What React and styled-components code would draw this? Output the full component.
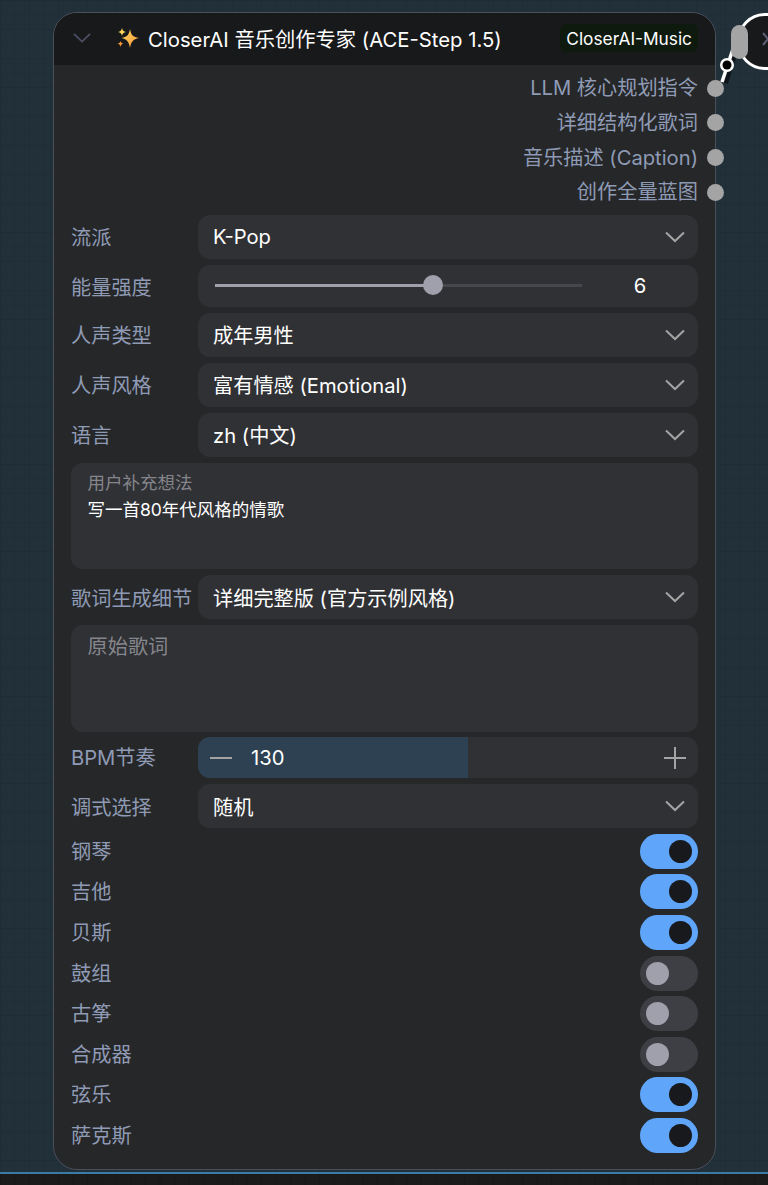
import React from "react";
import styled, { createGlobalStyle } from "styled-components";

const Global = createGlobalStyle`
  html, body { margin: 0; padding: 0; background: #1a1a1a; }
  body { font-family: Inter, "Noto Sans CJK SC", "Noto Sans", sans-serif; }
`;

const Page = styled.div`
  width: 768px;
  height: 1185px;
  overflow: hidden;
  background-color: #1b1b1b;
  background-image: linear-gradient(90deg, #171717 1px, transparent 1px);
  background-size: 14.5px 14.5px;
`;

const Canvas = styled.div`
  position: relative;
  height: 1174px;
  box-sizing: border-box;
  padding: 12px 0 0 53px;
  background-color: #22303a;
  background-image:
    linear-gradient(#202d36 1px, transparent 1px),
    linear-gradient(90deg, #202d36 1px, transparent 1px);
  background-size: 14.5px 14.5px;
  border-bottom: 2px solid #3a7ca5;
  overflow: hidden;
`;

const Node = styled.div`
  position: relative;
  width: 663px;
  height: 1158px;
  box-sizing: border-box;
  border: 1px solid #4a4f5c;
  border-radius: 24px;
  background: #262729;
`;

const Header = styled.div`
  display: flex;
  align-items: center;
  height: 52px;
  box-sizing: border-box;
  padding: 0 17px 2px 19px;
  background: #18191a;
  border-radius: 23px 23px 0 0;
`;

const Title = styled.div`
  flex: 1;
  display: flex;
  align-items: center;
  gap: 9px;
  margin-left: 26px;
  color: #fff;
  font-size: 20.3px;
  white-space: nowrap;
`;

const Badge = styled.div`
  display: flex;
  align-items: center;
  height: 28px;
  padding: 0 6px;
  border-radius: 6px;
  background: #0f1a0f;
  color: #fff;
  font-size: 17.3px;
  white-space: nowrap;
`;

const Outputs = styled.div`
  display: flex;
  flex-direction: column;
  margin-top: 6px;
`;

const Output = styled.div`
  position: relative;
  display: flex;
  align-items: center;
  justify-content: flex-end;
  height: 34.67px;
  padding-right: 17px;
  padding-bottom: 3px;
  box-sizing: border-box;
  color: #8f9bb5;
  font-size: 20.2px;
  white-space: nowrap;
`;

const Slot = styled.span`
  position: absolute;
  right: -9px;
  top: 50%;
  width: 17px;
  height: 17px;
  margin-top: -8.5px;
  border-radius: 50%;
  background: #a4a4a4;
`;

const Widgets = styled.div`
  display: flex;
  flex-direction: column;
  gap: 5.6px;
  padding: 0 17px;
  margin-top: 5px;
`;

const Row = styled.div`
  display: grid;
  grid-template-columns: 127px 1fr;
  align-items: center;
`;

const Label = styled.div`
  box-sizing: border-box;
  padding-top: ${(p) => p.$pt}px;
  color: #8f9bb5;
  font-size: 20.2px;
  line-height: 26px;
  white-space: nowrap;
`;

const Field = styled.div`
  display: flex;
  align-items: center;
  box-sizing: border-box;
  height: ${(p) => p.$h}px;
  padding: 0 12px 0 15px;
  border-radius: 12px;
  background: #303135;
  color: #fff;
  font-size: 20.2px;
  white-space: nowrap;
`;

const Value = styled.span`
  flex: 1;
`;

const SliderTrack = styled.div`
  position: relative;
  width: 367px;
  height: 3px;
  margin-left: 2px;
  background: #46474c;
`;

const SliderFill = styled.div`
  height: 100%;
  background: #a0a0ac;
`;

const SliderThumb = styled.span`
  position: absolute;
  top: -9px;
  width: 20px;
  height: 20px;
  margin-left: -10px;
  border-radius: 50%;
  background: #a0a0ac;
`;

const SliderValue = styled.span`
  flex: 1;
  text-align: center;
  padding-left: 12px;
`;

const Area = styled.div`
  box-sizing: border-box;
  height: 106.8px;
  padding: 8px 16.5px;
  border-radius: 12px;
  background: #303135;
`;

const AreaHint = styled.div`
  color: #85868c;
  font-size: ${(p) => p.$size}px;
  line-height: ${(p) => p.$lh}px;
`;

const AreaText = styled.div`
  color: #fff;
  font-size: 17.5px;
  line-height: 30px;
`;

const Stepper = styled.div`
  position: relative;
  display: flex;
  align-items: center;
  box-sizing: border-box;
  height: 41px;
  padding: 0 11px;
  border-radius: 12px;
  overflow: hidden;
  background: #303135;
  color: #fff;
  font-size: 20.2px;
`;

const StepperFill = styled.div`
  position: absolute;
  left: 0;
  top: 0;
  bottom: 0;
  background: #2d4153;
`;

const StepperNum = styled.span`
  position: relative;
  flex: 1;
  margin-left: 18px;
`;

const StepperIcon = styled.svg`
  position: relative;
  display: block;
  flex: none;
`;

const ToggleRow = styled.div`
  display: flex;
  align-items: center;
  justify-content: space-between;
  height: 35px;
`;

const Toggle = styled.div`
  display: flex;
  align-items: center;
  justify-content: ${(p) => (p.$on ? "flex-end" : "flex-start")};
  box-sizing: border-box;
  width: 58px;
  height: 35px;
  padding: 0 6px;
  border-radius: 18px;
  background: ${(p) => (p.$on ? "#5fa5fa" : "#3e3f44")};
`;

const Knob = styled.span`
  width: 23px;
  height: 23px;
  border-radius: 50%;
  background: ${(p) => (p.$on ? "#18191c" : "#a0a0ac")};
`;

const Other = styled.div`
  position: absolute;
  left: 737px;
  top: 13px;
  width: 80px;
  height: 57px;
  box-sizing: border-box;
  border: 3px solid #fff;
  border-radius: 28px;
  background: #18191a;
`;

const Overlay = styled.svg`
  position: absolute;
  left: 700px;
  top: 0;
`;

const ChevronIcon = styled.svg`
  display: block;
  flex: none;
  margin-right: ${(p) => p.$mr}px;
`;

const Chevron = ({ color = "#a4a4a4", w = 20, sw = 2, mr = 1 }) => (
  <ChevronIcon $mr={mr} width={w} height="12" viewBox="0 0 20 12" fill="none">
    <path d="M1 1.5 L10 10 L19 1.5" stroke={color} strokeWidth={sw} />
  </ChevronIcon>
);

const Sparkle = () => (
  <svg width="22" height="22" viewBox="0 0 22 20" style={{ flex: "none" }}>
    <defs>
      <linearGradient id="sp" x1="0" y1="0" x2="1" y2="1">
        <stop offset="0" stopColor="#ffd65a" />
        <stop offset="1" stopColor="#f7963c" />
      </linearGradient>
    </defs>
    <path d="M13 1 C14 7 16 9 22 10 C16 11 14 14 13 20 C12 14 10 11 4.5 10 C10 9 12 7 13 1Z" fill="url(#sp)" />
    <path d="M5 0 C5.5 2.5 6.5 3.3 9 4 C6.5 4.6 5.5 5.4 5 8 C4.5 5.4 3.5 4.6 1 4 C3.5 3.3 4.5 2.5 5 0Z" fill="#ffd65a" />
    <path d="M3.5 13 C3.9 14.6 4.5 15.2 6.5 15.7 C4.5 16.1 3.9 16.8 3.5 19 C3.1 16.8 2.5 16.1 0.5 15.7 C2.5 15.2 3.1 14.6 3.5 13Z" fill="#f7963c" />
  </svg>
);

const outputs = ["LLM 核心规划指令", "详细结构化歌词", "音乐描述 (Caption)", "创作全量蓝图"];
const toggles = [
  ["钢琴", true],
  ["吉他", true],
  ["贝斯", true],
  ["鼓组", false],
  ["古筝", false],
  ["合成器", false],
  ["弦乐", true],
  ["萨克斯", true],
];

const Select = ({ label, value }) => (
  <Row>
    <Label $pt={3}>{label}</Label>
    <Field $h={44.4}>
      <Value>{value}</Value>
      <Chevron />
    </Field>
  </Row>
);

export default function App() {
  return (
    <Page>
      <Global />
      <Canvas>
        <Other />
        <Node>
          <Header>
            <Chevron color="#4c4f63" w={18} mr={0} />
            <Title>
              <Sparkle />
              <span>CloserAI 音乐创作专家 (ACE-Step 1.5)</span>
            </Title>
            <Badge>CloserAI-Music</Badge>
          </Header>
          <Outputs>
            {outputs.map((o) => (
              <Output key={o}>
                {o}
                <Slot />
              </Output>
            ))}
          </Outputs>
          <Widgets>
            <Select label="流派" value="K-Pop" />
            <Row>
              <Label $pt={5}>能量强度</Label>
              <Field $h={42.4}>
                <SliderTrack>
                  <SliderFill style={{ width: "59.4%" }} />
                  <SliderThumb style={{ left: "59.4%" }} />
                </SliderTrack>
                <SliderValue>6</SliderValue>
              </Field>
            </Row>
            <Select label="人声类型" value="成年男性" />
            <Select label="人声风格" value="富有情感 (Emotional)" />
            <Select label="语言" value="zh (中文)" />
            <Area>
              <AreaHint $size={17.5} $lh={24}>用户补充想法</AreaHint>
              <AreaText>写一首80年代风格的情歌</AreaText>
            </Area>
            <Select label="歌词生成细节" value="详细完整版 (官方示例风格)" />
            <Area>
              <AreaHint $size={20.2} $lh={28}>原始歌词</AreaHint>
            </Area>
            <Row>
              <Label $pt={0}>BPM节奏</Label>
              <Stepper>
                <StepperFill style={{ width: "54%" }} />
                <StepperIcon width="24" height="24" viewBox="0 0 24 24">
                  <path d="M1 12H23" stroke="#a4a4a4" strokeWidth="2" />
                </StepperIcon>
                <StepperNum>130</StepperNum>
                <StepperIcon width="24" height="24" viewBox="0 0 24 24">
                  <path d="M1 12H23M12 1V23" stroke="#a4a4a4" strokeWidth="2" />
                </StepperIcon>
              </Stepper>
            </Row>
            <Select label="调式选择" value="随机" />
            {toggles.map(([name, on]) => (
              <ToggleRow key={name}>
                <Label $pt={1}>{name}</Label>
                <Toggle $on={on}>
                  <Knob $on={on} />
                </Toggle>
              </ToggleRow>
            ))}
          </Widgets>
        </Node>
        <Overlay width="68" height="100" viewBox="0 0 68 100">
          <path d="M25 83 L31 64 L38 42" stroke="#000" strokeWidth="6" fill="none" opacity="0.55" />
          <path d="M22 82 L28 64 L34 46" stroke="#fff" strokeWidth="3.5" fill="none" />
          <circle cx="27" cy="65" r="7" fill="#fff" />
          <circle cx="27" cy="65" r="4.5" fill="#000" />
          <rect x="31" y="25" width="17" height="34" rx="8.5" fill="#a4a4a4" />
          <path d="M63 33 L68 39 M63 45 L68 39" stroke="#5c5e73" strokeWidth="2" fill="none" />
        </Overlay>
      </Canvas>
    </Page>
  );
}
